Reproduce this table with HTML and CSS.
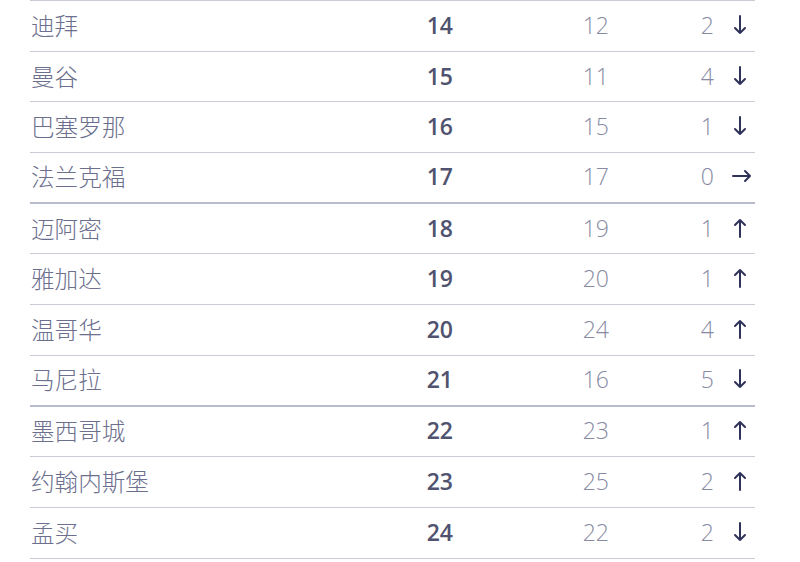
FILE: index.html
```html
<!DOCTYPE html>
<html lang="zh">
<head>
<meta charset="utf-8">
<link rel="stylesheet" href="styles.css">
</head>
<body>
<div class="table">
  <div class="row"><span class="city">迪拜</span><span class="rank">14</span><span class="prev">12</span><span class="diff">2</span><span class="trend"><svg viewBox="0 0 16 20"><path d="M8 1V18M3 13L8 18L13 13"/></svg></span></div>
  <div class="row"><span class="city">曼谷</span><span class="rank">15</span><span class="prev">11</span><span class="diff">4</span><span class="trend"><svg viewBox="0 0 16 20"><path d="M8 1V18M3 13L8 18L13 13"/></svg></span></div>
  <div class="row"><span class="city">巴塞罗那</span><span class="rank">16</span><span class="prev">15</span><span class="diff">1</span><span class="trend"><svg viewBox="0 0 16 20"><path d="M8 1V18M3 13L8 18L13 13"/></svg></span></div>
  <div class="row group-end"><span class="city">法兰克福</span><span class="rank">17</span><span class="prev">17</span><span class="diff">0</span><span class="trend"><svg class="wide" viewBox="0 0 20 20"><path d="M1 10H18M13 5L18 10L13 15"/></svg></span></div>
  <div class="row"><span class="city">迈阿密</span><span class="rank">18</span><span class="prev">19</span><span class="diff">1</span><span class="trend"><svg viewBox="0 0 16 20"><path d="M8 19V2M3 7L8 2L13 7"/></svg></span></div>
  <div class="row"><span class="city">雅加达</span><span class="rank">19</span><span class="prev">20</span><span class="diff">1</span><span class="trend"><svg viewBox="0 0 16 20"><path d="M8 19V2M3 7L8 2L13 7"/></svg></span></div>
  <div class="row"><span class="city">温哥华</span><span class="rank">20</span><span class="prev">24</span><span class="diff">4</span><span class="trend"><svg viewBox="0 0 16 20"><path d="M8 19V2M3 7L8 2L13 7"/></svg></span></div>
  <div class="row group-end"><span class="city">马尼拉</span><span class="rank">21</span><span class="prev">16</span><span class="diff">5</span><span class="trend"><svg viewBox="0 0 16 20"><path d="M8 1V18M3 13L8 18L13 13"/></svg></span></div>
  <div class="row"><span class="city">墨西哥城</span><span class="rank">22</span><span class="prev">23</span><span class="diff">1</span><span class="trend"><svg viewBox="0 0 16 20"><path d="M8 19V2M3 7L8 2L13 7"/></svg></span></div>
  <div class="row"><span class="city">约翰内斯堡</span><span class="rank">23</span><span class="prev">25</span><span class="diff">2</span><span class="trend"><svg viewBox="0 0 16 20"><path d="M8 19V2M3 7L8 2L13 7"/></svg></span></div>
  <div class="row"><span class="city">孟买</span><span class="rank">24</span><span class="prev">22</span><span class="diff">2</span><span class="trend"><svg viewBox="0 0 16 20"><path d="M8 1V18M3 13L8 18L13 13"/></svg></span></div>
</div>
</body>
</html>
```

FILE: styles.css
```css
html, body {
  margin: 0;
  padding: 0;
  background: #ffffff;
}

body {
  font-family: "Open Sans", "Noto Sans CJK SC", sans-serif;
}

.table {
  margin-left: 30px;
  width: 725px;
  border-top: 1px solid #c9cbd9;
}

.row {
  display: grid;
  grid-template-columns: 300px 123px 156px 105px 41px;
  align-items: center;
  box-sizing: border-box;
  height: 50.7px;
  padding-bottom: 2px;
  border-bottom: 1px solid #c9cbd9;
  font-size: 23px;
}

.row.group-end {
  border-bottom: 2px solid #b9bccd;
}

.city {
  padding-left: 1px;
  font-family: "Noto Sans CJK SC", sans-serif;
  font-weight: 300;
  font-size: 23.6px;
  color: #6c6f8e;
}

.rank {
  text-align: right;
  font-weight: 600;
  color: #50536f;
}

.prev, .diff {
  text-align: right;
  font-weight: 300;
  color: #878aa2;
}

.trend {
  display: flex;
  padding-left: 18px;
}

.trend svg {
  width: 16px;
  height: 20px;
  fill: none;
  stroke: #2f3259;
  stroke-width: 2;
  stroke-linecap: round;
  stroke-linejoin: round;
}

.trend svg.wide {
  width: 20px;
}
```
